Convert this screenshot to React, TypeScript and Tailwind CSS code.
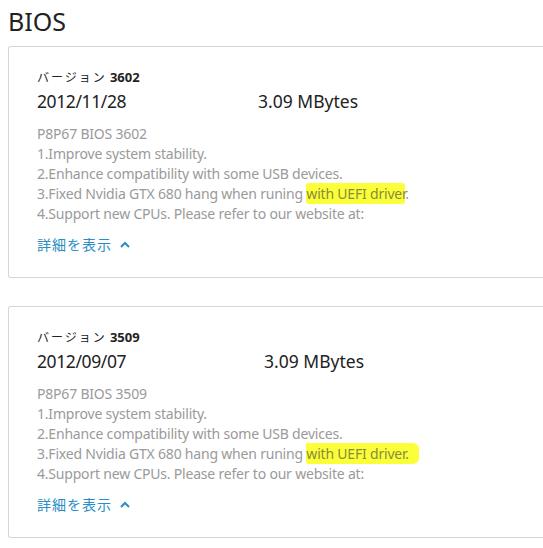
const font = { fontFamily: '"Noto Sans", "Noto Sans CJK JP", sans-serif' };

type Entry = { version: string; date: string; size: string; sizeX: string; tail: boolean };

const entries: Entry[] = [
  { version: "3602", date: "2012/11/28", size: "3.09 MBytes", sizeX: "w-[221px]", tail: false },
  { version: "3509", date: "2012/09/07", size: "3.09 MBytes", sizeX: "w-[227px]", tail: true },
];

function Card({ e }: { e: Entry }) {
  return (
    <div className="border border-[#d6d6d6] border-r-0 rounded-l-[3px] pl-[28px] pt-[22px] pb-[23px] text-[#222]">
      <div className="text-[12px] leading-[16px]">
        <span className="tracking-[2px]" style={{ fontFamily: '"Noto Sans CJK JP", sans-serif' }}>バージョン</span>{" "}
        <span className="font-bold text-[13px]">{e.version}</span>
      </div>
      <div className="flex text-[17.5px] leading-[26px] mt-[2px]">
        <span className={e.sizeX + " tracking-[-0.4px]"}>{e.date}</span>
        <span>{e.size}</span>
      </div>
      <div className="mt-[10px] text-[14px] leading-[20px] tracking-[-0.2px] text-[#9a9a9a]">
        <div>P8P67 BIOS {e.version}</div>
        <div>1.Improve system stability.</div>
        <div>2.Enhance compatibility with some USB devices.</div>
        <div>
          3.Fixed Nvidia GTX 680 hang when runing{" "}
          {e.tail ? (
            <span className="bg-[#fbff3a] text-[#8a8a3a] pr-[10px] py-[1px] rounded-r-[6px] rounded-bl-[2px]">with UEFI driver.</span>
          ) : (
            <>
              <span className="bg-[#fbff3a] text-[#8a8a3a] py-[1px] rounded-[3px]">with UEFI driver</span>.
            </>
          )}
        </div>
        <div>4.Support new CPUs. Please refer to our website at:</div>
      </div>
      <div className="mt-[10px] flex items-center gap-[8px] text-[14px] leading-[20px] text-[#2a8dc5]">
        <span className="tracking-[1px]" style={{ fontFamily: '"Noto Sans CJK JP", sans-serif' }}>詳細を表示</span>
        <svg width="10" height="7" viewBox="0 0 10 7" fill="none" stroke="#2a8dc5" strokeWidth="2">
          <path d="M1 6 L5 2 L9 6" />
        </svg>
      </div>
    </div>
  );
}

export default function App() {
  return (
    <div className="w-[543px] h-[548px] bg-white overflow-hidden pl-[8px]" style={font}>
      <h1 className="text-[25px] leading-[30px] pt-[6px] text-[#222]">BIOS</h1>
      <div className="mt-[10px] flex flex-col gap-[28px]">
        {entries.map((e) => (
          <Card key={e.version} e={e} />
        ))}
      </div>
    </div>
  );
}
